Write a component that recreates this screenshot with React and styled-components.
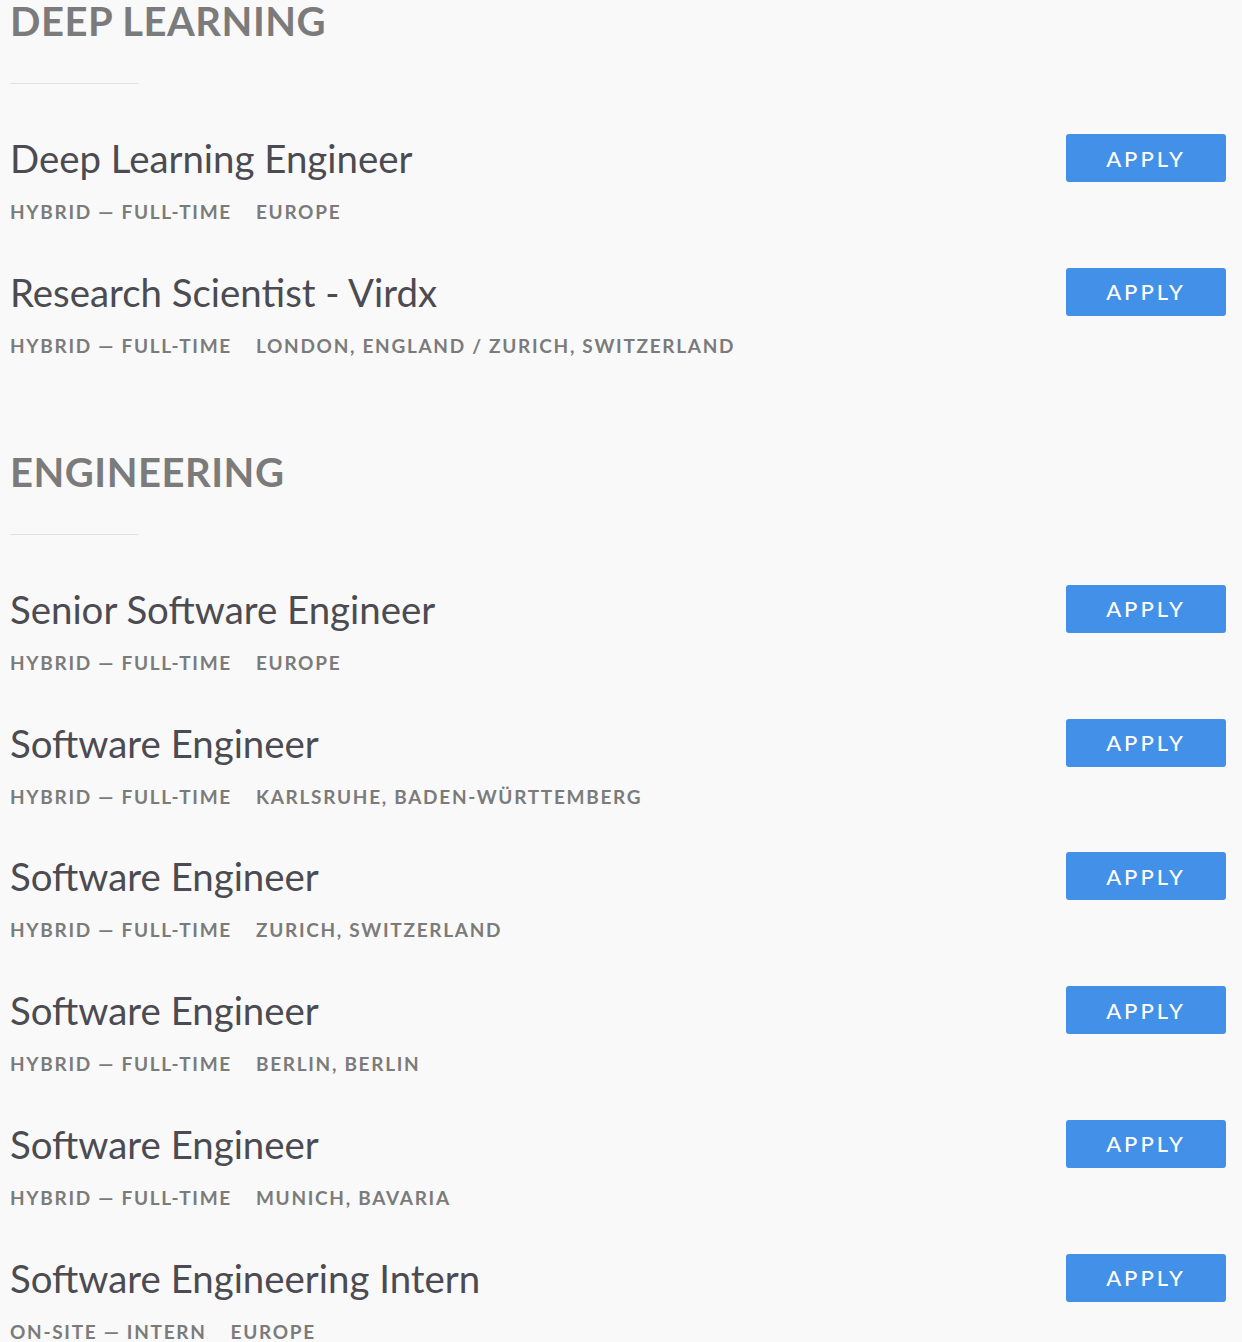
import styled, { createGlobalStyle } from 'styled-components';

const sections = [
  {
    name: 'Deep Learning',
    jobs: [
      { title: 'Deep Learning Engineer', type: 'Hybrid — Full-time', location: 'Europe' },
      {
        title: 'Research Scientist - Virdx',
        type: 'Hybrid — Full-time',
        location: 'London, England / Zurich, Switzerland',
      },
    ],
  },
  {
    name: 'Engineering',
    jobs: [
      { title: 'Senior Software Engineer', type: 'Hybrid — Full-time', location: 'Europe' },
      { title: 'Software Engineer', type: 'Hybrid — Full-time', location: 'Karlsruhe, Baden-Württemberg' },
      { title: 'Software Engineer', type: 'Hybrid — Full-time', location: 'Zurich, Switzerland' },
      { title: 'Software Engineer', type: 'Hybrid — Full-time', location: 'Berlin, Berlin' },
      { title: 'Software Engineer', type: 'Hybrid — Full-time', location: 'Munich, Bavaria' },
      { title: 'Software Engineering Intern', type: 'On-site — Intern', location: 'Europe' },
    ],
  },
];

export default function App() {
  return (
    <>
      <GlobalStyle />
      <Page>
        {sections.map(({ name, jobs }) => (
          <Section key={name}>
            <Heading>{name}</Heading>
            <Divider />
            <List>
              {jobs.map(({ title, type, location }, i) => (
                <Row key={i}>
                  <Info>
                    <Title>{title}</Title>
                    <Meta>
                      <span>{type}</span>
                      <span>{location}</span>
                    </Meta>
                  </Info>
                  <ApplyButton>Apply</ApplyButton>
                </Row>
              ))}
            </List>
          </Section>
        ))}
      </Page>
    </>
  );
}

const GlobalStyle = createGlobalStyle`
  html, body {
    margin: 0;
    padding: 0;
    background: #f9f9f9;
  }
  body {
    font-family: Lato, 'Open Sans', sans-serif;
    -webkit-font-smoothing: antialiased;
  }
`;

const Page = styled.div`
  padding: 1px 16px 0 10px;
`;

const Section = styled.section`
  & + & {
    margin-top: 95px;
  }
`;

const Heading = styled.h2`
  margin: 0;
  font-size: 40px;
  line-height: 40px;
  font-weight: 700;
  text-transform: uppercase;
  color: #7b7b7b;
  letter-spacing: 0.5px;
`;

const Divider = styled.hr`
  width: 128px;
  height: 1px;
  margin: 42px 0 0;
  border: none;
  background: #e1e1e1;
`;

const List = styled.div`
  display: flex;
  flex-direction: column;
  gap: 44.8px;
  margin-top: 50px;
`;

const Row = styled.div`
  display: flex;
  justify-content: space-between;
  align-items: flex-start;
`;

const Info = styled.div`
  display: flex;
  flex-direction: column;
  gap: 19px;
  padding-top: 1px;
`;

const Title = styled.h3`
  margin: 0;
  font-size: 38.4px;
  line-height: 46px;
  font-weight: 400;
  color: #4b4b51;
`;

const Meta = styled.div`
  display: flex;
  gap: 24px;
  font-size: 19px;
  line-height: 23px;
  font-weight: 700;
  letter-spacing: 1.7px;
  text-transform: uppercase;
  color: #7b7b7b;
`;

const ApplyButton = styled.button`
  flex-shrink: 0;
  width: 160px;
  height: 48px;
  border: none;
  border-radius: 3px;
  background: #4290e8;
  color: #fff;
  font-family: inherit;
  font-size: 22px;
  font-weight: 500;
  letter-spacing: 3px;
  text-transform: uppercase;
  cursor: pointer;
`;
